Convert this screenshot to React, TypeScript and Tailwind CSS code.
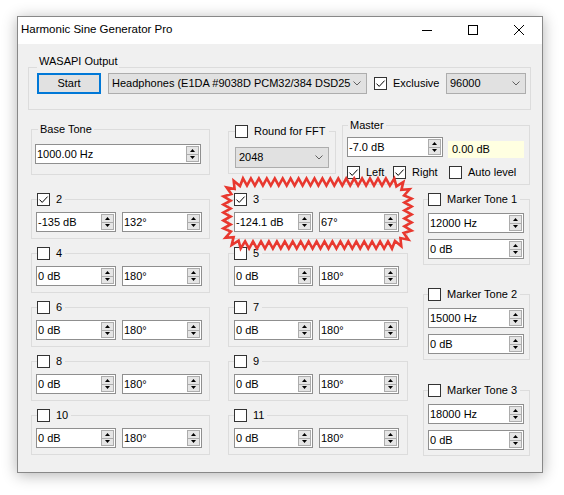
import React from "react";

function Up() {
  return (
    <svg width="5" height="3" viewBox="0 0 5 3" className="block">
      <path d="M0 3L2.5 0L5 3Z" fill="#000" />
    </svg>
  );
}
function Down() {
  return (
    <svg width="5" height="3" viewBox="0 0 5 3" className="block">
      <path d="M0 0L5 0L2.5 3Z" fill="#000" />
    </svg>
  );
}

function Spin({ value, w }: { value: string; w: string }) {
  return (
    <div className={`flex h-[20px] shrink-0 items-stretch border border-[#8f8f8f] bg-white ${w}`}>
      <span className="flex flex-1 items-center overflow-hidden whitespace-nowrap pl-[1px] leading-none">{value}</span>
      <div className="my-[1px] mr-[1px] flex w-[13px] flex-col">
        <div className="flex flex-1 items-center justify-center border border-[#acacac] bg-[#e5e5e5]">
          <Up />
        </div>
        <div className="flex flex-1 items-center justify-center border border-t-0 border-[#acacac] bg-[#e5e5e5]">
          <Down />
        </div>
      </div>
    </div>
  );
}

function Combo({ value, w }: { value: string; w: string }) {
  return (
    <div className={`flex h-[21px] shrink-0 items-center border border-[#adadad] bg-[#e1e1e1] pl-[3px] pr-[5px] ${w}`}>
      <span className="flex-1 overflow-hidden whitespace-nowrap">{value}</span>
      <svg width="8" height="5" viewBox="0 0 8 5" className="block shrink-0">
        <path d="M0.5 0.5L4 4L7.5 0.5" fill="none" stroke="#606060" />
      </svg>
    </div>
  );
}

function Check({ checked }: { checked?: boolean }) {
  return (
    <span className="flex h-[13px] w-[13px] shrink-0 items-center justify-center border border-[#333] bg-white">
      {checked && (
        <svg width="11" height="11" viewBox="0 0 11 11" className="block">
          <path d="M1.5 5.6L4.2 8.4L9.6 2.6" fill="none" stroke="#000" strokeWidth="1" />
        </svg>
      )}
    </span>
  );
}

function CheckLabel({ checked, label }: { checked?: boolean; label: string }) {
  return (
    <span className="flex h-[13px] items-center gap-[6px] leading-[13px]">
      <Check checked={checked} />
      <span className="whitespace-nowrap">{label}</span>
    </span>
  );
}

function Harm({ n, checked, db, deg, col }: { n: string; checked?: boolean; db: string; deg: string; col: 1 | 2 }) {
  const c1 = col === 1;
  return (
    <fieldset
      className={
        c1
          ? "h-[46px] w-[179px] border border-[#dcdcdc] pl-[4px] pt-[6px]"
          : "h-[46px] w-[180px] border border-[#dcdcdc] pl-[5px] pt-[6px]"
      }
    >
      <legend className={c1 ? "ml-[1px] pr-[3px]" : "pr-[3px]"}>
        <CheckLabel checked={checked} label={n} />
      </legend>
      <div className="flex gap-[6px]">
        <Spin value={db} w={c1 ? "w-[80px]" : "w-[79px]"} />
        <Spin value={deg} w="w-[80px]" />
      </div>
    </fieldset>
  );
}

function Marker({ label, hz, className }: { label: string; hz: string; className: string }) {
  return (
    <fieldset className={`h-[72px] w-[107px] border border-[#dcdcdc] pl-[4px] pt-[7px] ${className}`}>
      <legend className="pr-[3px]">
        <CheckLabel label={label} />
      </legend>
      <div className="flex flex-col gap-[6px]">
        <Spin value={hz} w="w-[96px]" />
        <Spin value="0 dB" w="w-[96px]" />
      </div>
    </fieldset>
  );
}

function zigzag(x0: number, y0: number, x1: number, y1: number, r: number, step: number, amp: number) {
  const sw = x1 - x0 - 2 * r;
  const sh = y1 - y0 - 2 * r;
  const arc = (Math.PI * r) / 2;
  const segs = [sw, arc, sh, arc, sw, arc, sh, arc];
  const P = segs.reduce((a, b) => a + b, 0);
  let N = Math.round(P / step);
  if (N % 2) N++;
  const at = (s0: number): [number, number, number, number] => {
    let s = s0;
    let i = 0;
    while (i < 7 && s > segs[i]) {
      s -= segs[i];
      i++;
    }
    let t: number;
    switch (i) {
      case 0:
        return [x0 + r + s, y0, 0, -1];
      case 1:
        t = -Math.PI / 2 + s / r;
        return [x1 - r + r * Math.cos(t), y0 + r + r * Math.sin(t), Math.cos(t), Math.sin(t)];
      case 2:
        return [x1, y0 + r + s, 1, 0];
      case 3:
        t = s / r;
        return [x1 - r + r * Math.cos(t), y1 - r + r * Math.sin(t), Math.cos(t), Math.sin(t)];
      case 4:
        return [x1 - r - s, y1, 0, 1];
      case 5:
        t = Math.PI / 2 + s / r;
        return [x0 + r + r * Math.cos(t), y1 - r + r * Math.sin(t), Math.cos(t), Math.sin(t)];
      case 6:
        return [x0, y1 - r - s, -1, 0];
      default:
        t = Math.PI + s / r;
        return [x0 + r + r * Math.cos(t), y0 + r + r * Math.sin(t), Math.cos(t), Math.sin(t)];
    }
  };
  const pts: string[] = [];
  for (let k = 0; k < N; k++) {
    const [px, py, nx, ny] = at((k * P) / N);
    const o = k % 2 === 0 ? amp : -amp;
    pts.push(`${(px + nx * o).toFixed(1)},${(py + ny * o).toFixed(1)}`);
  }
  return "M" + pts.join("L") + "Z";
}

export default function App() {
  const zz = zigzag(227, 182, 408, 245, 16, 4, 3.6);
  return (
    <div className="relative h-[495px] w-[564px] overflow-hidden bg-white pl-[17px] pt-[16px] font-['Liberation_Sans',Arial,sans-serif] text-[11px] text-black">
      <div className="flex h-[457px] w-[526px] flex-col border border-[#888] bg-white shadow-[0_2px_14px_rgba(0,0,0,0.3)]">
        {/* title bar */}
        <div className="flex h-[27px] shrink-0 items-stretch pb-[2px]">
          <div className="flex flex-1 items-center pl-[3px] text-[11.5px]">Harmonic Sine Generator Pro</div>
          <div className="flex w-[46px] items-center justify-center">
            <svg width="10" height="10" viewBox="0 0 10 10" className="block">
              <path d="M0 5.5H10" stroke="#000" strokeWidth="1" />
            </svg>
          </div>
          <div className="flex w-[46px] items-center justify-center">
            <svg width="10" height="10" viewBox="0 0 10 10" className="block">
              <rect x="0.5" y="0.5" width="9" height="9" fill="none" stroke="#000" strokeWidth="1" />
            </svg>
          </div>
          <div className="flex w-[46px] items-center justify-center">
            <svg width="10" height="10" viewBox="0 0 10 10" className="block">
              <path d="M0 0L10 10M10 0L0 10" stroke="#000" strokeWidth="1" />
            </svg>
          </div>
        </div>

        {/* body */}
        <div className="flex-1 bg-[#f0f0f0] pt-[10px]">
          <fieldset className="ml-[10px] h-[56px] w-[503px] border border-[#dcdcdc] pl-[8px] pr-[4px]">
            <legend className="px-[2px]">
              <span className="block h-[26px] leading-[14px]">WASAPI Output</span>
            </legend>
            <div className="-mt-[8px] flex h-[22px] items-center">
              <div className="flex h-[21px] w-[64px] items-center justify-center border-2 border-[#0078d7] bg-[#e1e1e1]">
                Start
              </div>
              <div className="ml-[7px]">
                <Combo value="Headphones (E1DA #9038D PCM32/384 DSD25" w="w-[259px]" />
              </div>
              <span className="ml-[7px]">
                <CheckLabel checked label="Exclusive" />
              </span>
              <div className="ml-auto">
                <Combo value="96000" w="w-[80px]" />
              </div>
            </div>
          </fieldset>

          <div className="flex items-start">
            <fieldset className="ml-[13px] mt-[12px] h-[53px] w-[179px] border border-[#dcdcdc] pl-[3px] pt-[8px]">
              <legend className="ml-[3px] px-[2px] leading-[14px]">Base Tone</legend>
              <Spin value="1000.00 Hz" w="w-[166px]" />
            </fieldset>
            <fieldset className="ml-[18px] mt-[15px] h-[49px] w-[108px] border border-[#dcdcdc] pl-[6px] pt-[9px]">
              <legend className="pr-[3px]">
                <CheckLabel label="Round for FFT" />
              </legend>
              <Combo value="2048" w="w-[94px]" />
            </fieldset>
            <fieldset className="ml-[6px] mt-[8px] h-[67px] w-[188px] border border-[#dcdcdc] pl-[4px] pt-[5px]">
              <legend className="ml-[1px] px-[2px] leading-[14px]">Master</legend>
              <div className="flex items-start">
                <Spin value="-7.0 dB" w="w-[96px]" />
                <div className="ml-[5px] mt-[4px] flex h-[17px] w-[76px] items-center bg-[#ffffe1] pl-[4px]">0.00 dB</div>
              </div>
              <div className="mt-[8px] flex">
                <span className="w-[46px]">
                  <CheckLabel checked label="Left" />
                </span>
                <span className="w-[56px]">
                  <CheckLabel checked label="Right" />
                </span>
                <CheckLabel label="Auto level" />
              </div>
            </fieldset>
          </div>

          <div className="ml-[13px] mt-[8px] flex items-start">
            <div className="flex flex-col gap-[8px]">
              <Harm n="2" checked db="-135 dB" deg="132°" col={1} />
              <Harm n="4" db="0 dB" deg="180°" col={1} />
              <Harm n="6" db="0 dB" deg="180°" col={1} />
              <Harm n="8" db="0 dB" deg="180°" col={1} />
              <Harm n="10" db="0 dB" deg="180°" col={1} />
            </div>
            <div className="ml-[18px] flex flex-col gap-[8px]">
              <Harm n="3" checked db="-124.1 dB" deg="67°" col={2} />
              <Harm n="5" db="0 dB" deg="180°" col={2} />
              <Harm n="7" db="0 dB" deg="180°" col={2} />
              <Harm n="9" db="0 dB" deg="180°" col={2} />
              <Harm n="11" db="0 dB" deg="180°" col={2} />
            </div>
            <div className="ml-[15px] flex flex-col">
              <Marker label="Marker Tone 1" hz="12000 Hz" className="" />
              <Marker label="Marker Tone 2" hz="15000 Hz" className="mt-[23px]" />
              <Marker label="Marker Tone 3" hz="18000 Hz" className="mt-[24px]" />
            </div>
          </div>
        </div>
      </div>

      <svg
        width="564"
        height="495"
        viewBox="0 0 564 495"
        className="pointer-events-none absolute left-0 top-0"
      >
        <path d={zz} fill="none" stroke="#e8382f" strokeWidth="2.6" strokeLinejoin="miter" />
      </svg>
    </div>
  );
}
